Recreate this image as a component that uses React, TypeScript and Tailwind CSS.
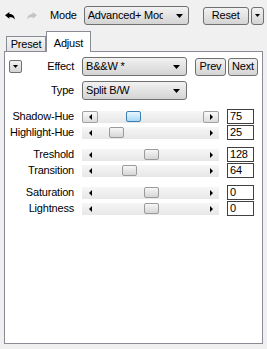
import React from 'react';

interface SliderRow {
  label: string;
  value: string;
  thumb: number;
  hover?: boolean;
  gap: string;
}

const rows: SliderRow[] = [
  { label: 'Shadow-Hue', value: '75', thumb: 44, hover: true, gap: 'mt-[9px]' },
  { label: 'Highlight-Hue', value: '25', thumb: 27, gap: 'mt-[1px]' },
  { label: 'Treshold', value: '128', thumb: 62, gap: 'mt-[7px]' },
  { label: 'Transition', value: '64', thumb: 40, gap: 'mt-[1px]' },
  { label: 'Saturation', value: '0', thumb: 62, gap: 'mt-[7px]' },
  { label: 'Lightness', value: '0', thumb: 62, gap: 'mt-[1px]' },
];

function Caret() {
  return (
    <svg width="7" height="4" viewBox="0 0 7 4" className="shrink-0">
      <path d="M0 0h7L3.5 4z" fill="#000" />
    </svg>
  );
}

function Tri({ dir }: { dir: 'left' | 'right' }) {
  return (
    <svg width="3" height="6" viewBox="0 0 3 6" className="shrink-0">
      {dir === 'left' ? <path d="M3 0v6L0 3z" fill="#000" /> : <path d="M0 0v6l3-3z" fill="#000" />}
    </svg>
  );
}

function Undo({ color }: { color: string }) {
  return (
    <svg width="10" height="8" viewBox="0 0 10 8">
      <path d="M0 3.2L4.4 0v2C7.4 2 9.6 3.6 9.8 7.6 8.7 5.6 7 4.9 4.4 4.9v1.9z" fill={color} />
    </svg>
  );
}

function Slider({ thumb, hover }: { thumb: number; hover?: boolean }) {
  return (
    <div className="relative ml-[7px] flex h-[12px] w-[137px] items-center justify-between bg-linear-to-b from-[#f6f6f6] to-[#e7e7e7]">
      {hover ? (
        <div className="flex h-[12px] w-[16px] items-center justify-center rounded-[2px] border border-[#a0a0a0] bg-linear-to-b from-[#fafafa] to-[#dcdcdc]">
          <Tri dir="left" />
        </div>
      ) : (
        <div className="flex w-[16px] justify-center">
          <Tri dir="left" />
        </div>
      )}
      {hover ? (
        <div className="flex h-[12px] w-[16px] items-center justify-center rounded-[2px] border border-[#a0a0a0] bg-linear-to-b from-[#fafafa] to-[#dcdcdc]">
          <Tri dir="right" />
        </div>
      ) : (
        <div className="flex w-[16px] justify-center">
          <Tri dir="right" />
        </div>
      )}
      <div
        className={
          hover
            ? 'absolute top-0 h-[11px] w-[15px] rounded-[2px] border border-[#3c7fb1] bg-linear-to-b from-[#eaf6fd] to-[#a7d9f5]'
            : 'absolute top-0 h-[11px] w-[15px] rounded-[2px] border border-[#9a9a9a] bg-linear-to-b from-[#f7f7f7] to-[#d6d6d6]'
        }
        style={{ left: thumb }}
      />
    </div>
  );
}

export default function App() {
  return (
    <div className="h-[349px] w-[267px] bg-[#f0f0f0] font-['Liberation_Sans',Arial,sans-serif] text-[11px] leading-none tracking-[-0.2px] text-black">
      <div className="flex h-[31px] items-center">
        <div className="ml-[5px]">
          <Undo color="#000" />
        </div>
        <div className="ml-[12px] -scale-x-100">
          <Undo color="#c4c4c4" />
        </div>
        <span className="ml-[13px]">Mode</span>
        <div className="ml-[7px] flex h-[19px] w-[105px] items-center justify-between rounded-[3px] border border-[#707070] bg-linear-to-b from-[#f2f2f2] to-[#d4d4d4] pl-[3px] pr-[5px]">
          <span className="w-[75px] overflow-hidden whitespace-nowrap">Advanced+ Mode</span>
          <Caret />
        </div>
        <div className="ml-[14px] flex h-[18px] w-[46px] items-center justify-center rounded-[3px] border border-[#707070] bg-linear-to-b from-[#f2f2f2] to-[#d4d4d4]">
          Reset
        </div>
        <div className="ml-[2px] flex h-[18px] w-[13px] items-center justify-center rounded-[3px] border border-[#707070] bg-linear-to-b from-[#f2f2f2] to-[#d4d4d4]">
          <svg width="5" height="3" viewBox="0 0 5 3">
            <path d="M0 0h5L2.5 3z" fill="#000" />
          </svg>
        </div>
      </div>

      <div className="flex h-[20px] items-end pl-[6px]">
        <div className="flex h-[15px] w-[40px] items-center justify-center border-x border-t border-[#898c95] bg-linear-to-b from-[#f5f5f5] to-[#e2e2e2] pt-[1px]">
          Preset
        </div>
        <div className="relative z-10 -mb-px flex h-[21px] w-[45px] justify-center border-x border-t border-[#898c95] bg-white pt-[6px]">
          Adjust
        </div>
      </div>

      <div className="ml-[4px] h-[293px] w-[259px] border border-[#898c95] bg-white pt-[5px]">
        <div className="flex h-[19px] items-center">
          <div className="flex w-[70px] items-center justify-between pl-[4px] pr-[1px]">
            <div className="flex h-[13px] w-[13px] items-center justify-center rounded-[2px] border border-[#707070] bg-linear-to-b from-[#f2f2f2] to-[#d4d4d4]">
              <svg width="5" height="3" viewBox="0 0 5 3">
                <path d="M0 0h5L2.5 3z" fill="#000" />
              </svg>
            </div>
            <span>Effect</span>
          </div>
          <div className="ml-[7px] flex h-[19px] w-[105px] items-center justify-between rounded-[3px] border border-[#707070] bg-linear-to-b from-[#f2f2f2] to-[#d4d4d4] pl-[3px] pr-[6px]">
            <span>B&amp;&amp;W *</span>
            <Caret />
          </div>
          <div className="ml-[8px] flex h-[18px] w-[31px] items-center justify-center rounded-[3px] border border-[#707070] bg-linear-to-b from-[#f2f2f2] to-[#d4d4d4]">
            Prev
          </div>
          <div className="ml-[2px] flex h-[18px] w-[30px] items-center justify-center rounded-[3px] border border-[#707070] bg-linear-to-b from-[#f2f2f2] to-[#d4d4d4]">
            Next
          </div>
        </div>

        <div className="mt-[5px] flex h-[19px] items-center">
          <div className="w-[70px] pr-[1px] text-right">Type</div>
          <div className="ml-[7px] flex h-[19px] w-[105px] items-center justify-between rounded-[3px] border border-[#707070] bg-linear-to-b from-[#f2f2f2] to-[#d4d4d4] pl-[3px] pr-[6px]">
            <span>Split B/W</span>
            <Caret />
          </div>
        </div>

        {rows.map((r) => (
          <div key={r.label} className={`${r.gap} flex h-[15px] items-center`}>
            <div className="w-[70px] whitespace-nowrap pr-[1px] text-right">{r.label}</div>
            <Slider thumb={r.thumb} hover={r.hover} />
            <div className="ml-[8px] flex h-[15px] w-[27px] items-center border border-[#404040] bg-white pl-[2px]">
              {r.value}
            </div>
          </div>
        ))}
      </div>
    </div>
  );
}
